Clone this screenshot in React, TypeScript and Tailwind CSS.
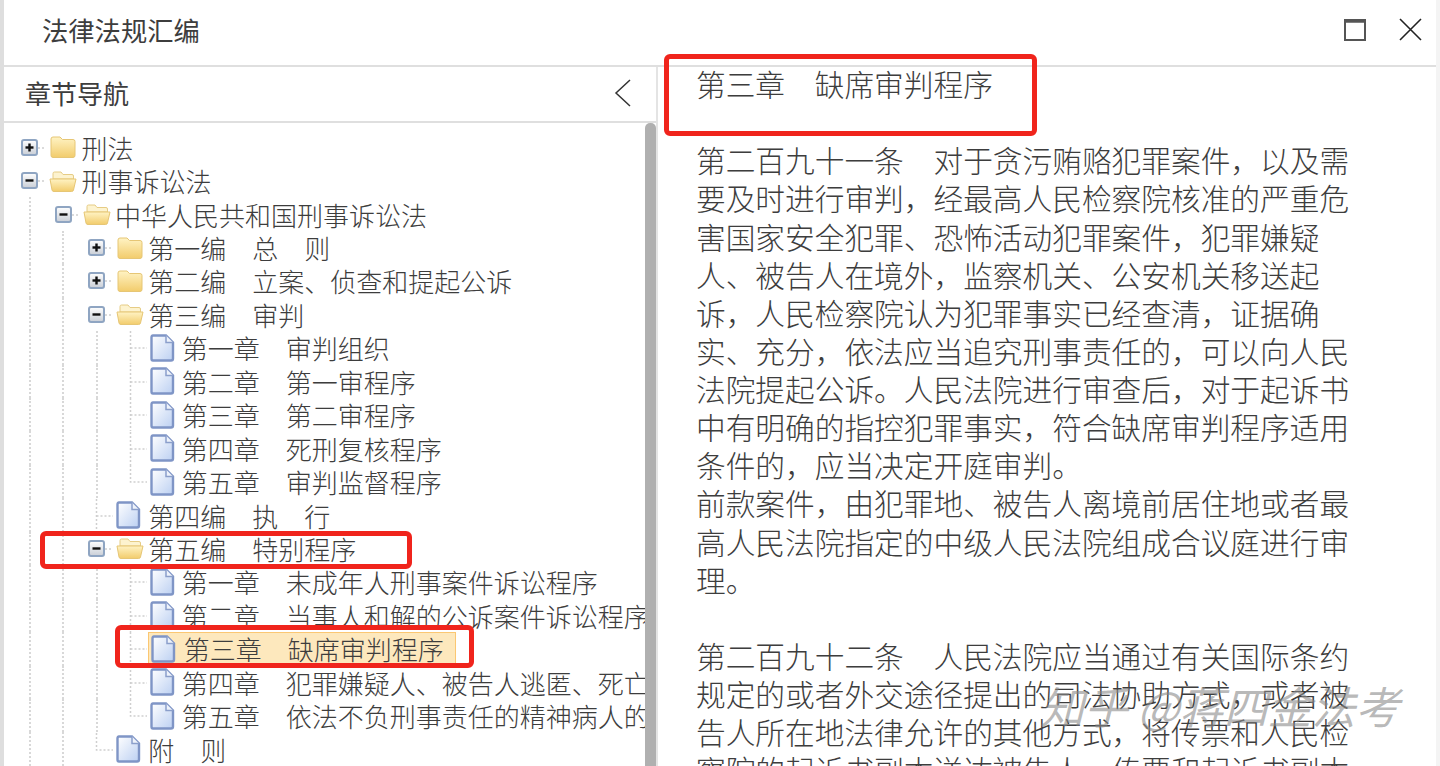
type Kind = 'closed' | 'open' | 'doc';

type TreeRow = {
  level: number;
  kind: Kind;
  label: string;
  last?: boolean;
  selected?: boolean;
};

const rows: TreeRow[] = [
  { level: 0, kind: 'closed', label: '刑法' },
  { level: 0, kind: 'open', label: '刑事诉讼法' },
  { level: 1, kind: 'open', label: '中华人民共和国刑事诉讼法' },
  { level: 2, kind: 'closed', label: '第一编　总　则' },
  { level: 2, kind: 'closed', label: '第二编　立案、侦查和提起公诉' },
  { level: 2, kind: 'open', label: '第三编　审判' },
  { level: 3, kind: 'doc', label: '第一章　审判组织' },
  { level: 3, kind: 'doc', label: '第二章　第一审程序' },
  { level: 3, kind: 'doc', label: '第三章　第二审程序' },
  { level: 3, kind: 'doc', label: '第四章　死刑复核程序' },
  { level: 3, kind: 'doc', label: '第五章　审判监督程序', last: true },
  { level: 2, kind: 'doc', label: '第四编　执　行' },
  { level: 2, kind: 'open', label: '第五编　特别程序' },
  { level: 3, kind: 'doc', label: '第一章　未成年人刑事案件诉讼程序' },
  { level: 3, kind: 'doc', label: '第二章　当事人和解的公诉案件诉讼程序' },
  { level: 3, kind: 'doc', label: '第三章　缺席审判程序', selected: true },
  { level: 3, kind: 'doc', label: '第四章　犯罪嫌疑人、被告人逃匿、死亡案件违法所得的没收程序' },
  { level: 3, kind: 'doc', label: '第五章　依法不负刑事责任的精神病人的强制医疗程序', last: true },
  { level: 2, kind: 'doc', label: '附　则', last: true },
];

const paragraphs = [
  '第二百九十一条　对于贪污贿赂犯罪案件，以及需要及时进行审判，经最高人民检察院核准的严重危害国家安全犯罪、恐怖活动犯罪案件，犯罪嫌疑人、被告人在境外，监察机关、公安机关移送起诉，人民检察院认为犯罪事实已经查清，证据确实、充分，依法应当追究刑事责任的，可以向人民法院提起公诉。人民法院进行审查后，对于起诉书中有明确的指控犯罪事实，符合缺席审判程序适用条件的，应当决定开庭审判。',
  '前款案件，由犯罪地、被告人离境前居住地或者最高人民法院指定的中级人民法院组成合议庭进行审理。',
];

const nextParagraph =
  '第二百九十二条　人民法院应当通过有关国际条约规定的或者外交途径提出的司法协助方式，或者被告人所在地法律允许的其他方式，将传票和人民检察院的起诉书副本送达被告人。传票和起诉书副本送达后';

// 展开/折叠按钮
function Expander({ open }: { open: boolean }) {
  return (
    <svg width="33" height="33" viewBox="0 0 33 33" className="shrink-0">
      <defs>
        <linearGradient id="expanderFill" x1="0" y1="0" x2="0" y2="1">
          <stop offset="0" stopColor="#ffffff" />
          <stop offset="1" stopColor="#c9ced6" />
        </linearGradient>
      </defs>
      <path d="M25 17 H33" stroke="#cfcfcf" strokeWidth="1.5" strokeDasharray="2 2" />
      <rect x="9" y="9" width="15" height="15" rx="2" fill="url(#expanderFill)" stroke="#8fa5c2" strokeWidth="2" />
      <path d="M12.5 16.5 H20.5" stroke="#111" strokeWidth="2.4" />
      {!open && <path d="M16.5 12.5 V20.5" stroke="#111" strokeWidth="2.4" />}
    </svg>
  );
}

// 节点连接线
function Elbow({ last }: { last?: boolean }) {
  return (
    <svg width="33" height="33" viewBox="0 0 33 33" className="shrink-0">
      <path
        d={last ? 'M16.5 0 V17 H33' : 'M16.5 0 V33 M16.5 17 H33'}
        fill="none"
        stroke="#cfcfcf"
        strokeWidth="1.5"
        strokeDasharray="2 2"
      />
    </svg>
  );
}

function FolderIcon({ open }: { open: boolean }) {
  return (
    <svg width="28" height="24" viewBox="0 0 28 24" className="shrink-0">
      <defs>
        <linearGradient id="folderFill" x1="0" y1="0" x2="0" y2="1">
          <stop offset="0" stopColor="#fff3c4" />
          <stop offset="1" stopColor="#f2cc6c" />
        </linearGradient>
      </defs>
      {open ? (
        <>
          <path d="M4 8 V4.5 Q4 3 5.5 3 H12 L14 5.5 H23 Q24.5 5.5 24.5 7 V10 H4 Z" fill="#fdf3cf" stroke="#e6cc85" />
          <path d="M1 10 H27 L24.5 21 Q24.2 22.5 22.5 22.5 H5 Q3.3 22.5 3 21 Z" fill="url(#folderFill)" stroke="#e6c675" />
        </>
      ) : (
        <path
          d="M2 4 Q2 2 4 2 H11 L13.5 4.5 H24 Q26 4.5 26 6.5 V20.5 Q26 22.5 24 22.5 H4 Q2 22.5 2 20.5 Z"
          fill="url(#folderFill)"
          stroke="#e6c675"
        />
      )}
    </svg>
  );
}

function DocIcon() {
  return (
    <svg width="25" height="28" viewBox="0 0 25 28" className="shrink-0">
      <defs>
        <linearGradient id="docFill" x1="0" y1="0" x2="1" y2="1">
          <stop offset="0" stopColor="#ffffff" />
          <stop offset="1" stopColor="#bcd0f2" />
        </linearGradient>
      </defs>
      <path
        d="M3 1.5 H16 L23 8.5 V24.5 Q23 26.5 21 26.5 H3 Q1.5 26.5 1.5 24.5 V3.5 Q1.5 1.5 3 1.5 Z"
        fill="url(#docFill)"
        stroke="#7f95c6"
        strokeWidth="2.4"
      />
      <path d="M16 1.5 V8.5 H23" fill="#eef3fb" stroke="#8b9fcb" strokeWidth="1.5" />
    </svg>
  );
}

function Row({ row }: { row: TreeRow }) {
  // 祖先层的竖线
  const guides = Array.from({ length: row.level });

  return (
    <div className="flex h-[33.44px] items-center whitespace-nowrap">
      {guides.map((_, i) => (
        <div key={i} className="flex h-full w-[33.44px] shrink-0 justify-center">
          <div className="h-full border-l-2 border-dotted border-[#d8d8d8]" />
        </div>
      ))}
      <div className="flex w-[33.44px] shrink-0 justify-center">
        {row.kind === 'doc' ? <Elbow last={row.last} /> : <Expander open={row.kind === 'open'} />}
      </div>
      {row.selected ? (
        <div className="ml-[1px] flex h-[33px] items-center gap-[2px] border border-[#fbc772] bg-[#fde8bd] pl-[2px] pr-[11px]">
          <DocIcon />
          <span className="ml-[6px]">{row.label}</span>
        </div>
      ) : (
        <div className={`flex items-center ${row.kind === 'doc' ? 'ml-[3px] gap-[7px]' : 'ml-[3px] gap-[4px]'}`}>
          {row.kind === 'doc' ? <DocIcon /> : <FolderIcon open={row.kind === 'open'} />}
          <span>{row.label}</span>
        </div>
      )}
    </div>
  );
}

export default function App() {
  return (
    <div className="relative h-[766px] w-[1440px] overflow-hidden border-l-4 border-r-4 border-l-[#dedede] border-r-[#f4f4f4] bg-white font-['Noto_Sans_CJK_SC',sans-serif] font-light text-[#3d3d3d]">
      {/* Title Bar */}
      <div className="flex h-[67px] items-center justify-between border-b-2 border-[#dfdfdf] pb-[6px] pl-[38px] pr-[14px]">
        <h1 className="text-[26.3px] font-normal">法律法规汇编</h1>
        <div className="flex items-center gap-[33px]">
          <svg width="22" height="22" viewBox="0 0 22 22">
            <rect x="1" y="1" width="20" height="20" fill="none" stroke="#555" strokeWidth="2" />
            <path d="M1 2.5 H21" stroke="#555" strokeWidth="2.5" />
          </svg>
          <svg width="23" height="23" viewBox="0 0 23 23">
            <path d="M1 1 L22 22 M22 1 L1 22" stroke="#222" strokeWidth="1.6" />
          </svg>
        </div>
      </div>

      <div className="flex h-[699px]">
        {/* Chapter Navigation */}
        <div className="flex w-[654px] shrink-0 flex-col border-r-2 border-[#e4e4e4]">
          <div className="flex h-[56px] shrink-0 items-center justify-between border-b-2 border-[#dfdfdf] pb-[3px] pl-[21px] pr-[24px]">
            <h2 className="text-[26px] font-normal">章节导航</h2>
            <svg width="18" height="28" viewBox="0 0 18 28">
              <path d="M16 1 L2 14 L16 27" fill="none" stroke="#333" strokeWidth="1.5" />
            </svg>
          </div>
          <div className="flex min-h-0 flex-1">
            <div className="min-w-0 flex-1 overflow-hidden pl-[9px] pt-[7.5px] text-[26px]">
              {rows.map((row) => (
                <Row key={row.label} row={row} />
              ))}
            </div>
            <div className="w-[11px] shrink-0 rounded-t-[5px] bg-[#b0b0b0]" />
          </div>
        </div>

        {/* Article Content */}
        <div className="-mt-[2px] min-w-0 flex-1 pl-[38px] pr-[82px] text-[29.7px] leading-[38.13px]">
          <p>第三章　缺席审判程序</p>
          <p>&nbsp;</p>
          {paragraphs.map((text) => (
            <p key={text}>{text}</p>
          ))}
          <p>&nbsp;</p>
          <p>{nextParagraph}</p>
        </div>
      </div>

      {/* Annotations */}
      <div className="absolute left-[660px] top-[54px] h-[82px] w-[373px] rounded-[6px] border-[5px] border-[#f0241c]" />
      <div className="absolute left-[36px] top-[531px] h-[38px] w-[372px] rounded-[6px] border-[5px] border-[#f0241c]" />
      <div className="absolute left-[111px] top-[625px] h-[43px] w-[359px] rounded-[6px] border-[5px] border-[#f0241c]" />

      {/* Watermark */}
      <div className="absolute left-[1036px] top-[672px] whitespace-nowrap text-[44px] font-normal italic text-[#8a8a8a]/60">
        知乎 @蒋四金法考
      </div>
    </div>
  );
}
